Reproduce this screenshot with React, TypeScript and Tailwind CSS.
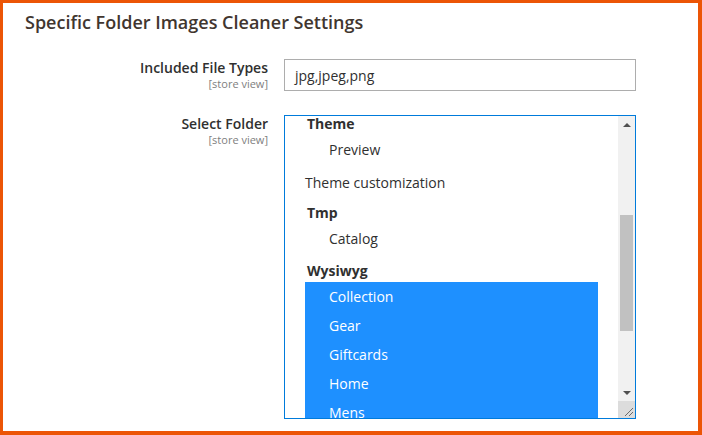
export default function App() {
  const groups: { kind: "label" | "opt" | "solo"; text: string; selected?: boolean }[] = [
    { kind: "label", text: "Theme" },
    { kind: "opt", text: "Preview" },
    { kind: "solo", text: "Theme customization" },
    { kind: "label", text: "Tmp" },
    { kind: "opt", text: "Catalog" },
    { kind: "label", text: "Wysiwyg" },
    { kind: "opt", text: "Collection", selected: true },
    { kind: "opt", text: "Gear", selected: true },
    { kind: "opt", text: "Giftcards", selected: true },
    { kind: "opt", text: "Home", selected: true },
    { kind: "opt", text: "Mens", selected: true },
  ]

  return (
    <div className="h-[435px] w-[702px] overflow-hidden border-t-[3px] border-l-[3px] border-r-[4px] border-b-[4px] border-[#ec5506] bg-white pl-[22px] pt-[7px] font-['Open_Sans',sans-serif] text-[#303030]">
      {/* Title */}
      <h2 className="text-[18px] font-semibold leading-[24px] text-[#41362f]">
        Specific Folder Images Cleaner Settings
      </h2>

      {/* Included File Types */}
      <div className="mt-[25px] flex gap-4">
        <div className="w-[243px] text-right">
          <div className="text-[14px] font-semibold leading-[18px]">Included File Types</div>
          <div className="text-[11px] leading-[13px] text-[#808080]">[store view]</div>
        </div>
        <div className="flex h-[32px] w-[352px] items-center border border-[#adadad] px-[10px] text-[14px]">
          jpg,jpeg,png
        </div>
      </div>

      {/* Select Folder */}
      <div className="mt-[24px] flex gap-4">
        <div className="w-[243px] text-right">
          <div className="text-[14px] font-semibold leading-[18px]">Select Folder</div>
          <div className="text-[11px] leading-[13px] text-[#808080]">[store view]</div>
        </div>
        <div className="flex h-[304px] w-[352px] border border-[#007bdb]">
          <div className="flex-1 overflow-hidden px-[20px]">
            <div className="-mt-[10px] text-[14px] leading-[19px]">
              {groups.map((g, i) => {
                if (g.kind === "label")
                  return (
                    <div key={i} className="h-[29px] pl-[2px] pt-[8px] font-bold">
                      {g.text}
                    </div>
                  )
                if (g.kind === "solo")
                  return (
                    <div key={i} className="h-[31px] pt-[9px]">
                      {g.text}
                    </div>
                  )
                return (
                  <div
                    key={i}
                    className={`flex h-[29px] items-center pl-[24px] ${
                      g.selected ? "bg-[#1e90ff] text-white" : ""
                    }`}
                  >
                    {g.text}
                  </div>
                )
              })}
            </div>
          </div>

          {/* Scrollbar */}
          <div className="flex w-[17px] flex-col bg-[#f1f1f1]">
            <div className="flex h-[17px] items-center justify-center">
              <div className="h-0 w-0 border-x-[4px] border-b-[4px] border-x-transparent border-b-[#505050]" />
            </div>
            <div className="flex-1">
              <div className="mx-[2px] mt-[82px] h-[116px] bg-[#c1c1c1]" />
            </div>
            <div className="flex h-[17px] items-center justify-center">
              <div className="h-0 w-0 border-x-[4px] border-t-[4px] border-x-transparent border-t-[#505050]" />
            </div>
            <div className="h-[17px] bg-[#dcdcdc]">
              <svg width="17" height="17" viewBox="0 0 17 17">
                <line x1="15" y1="7" x2="7" y2="15" stroke="#6b6b6b" strokeWidth="1" />
                <line x1="15" y1="11" x2="11" y2="15" stroke="#6b6b6b" strokeWidth="1" />
              </svg>
            </div>
          </div>
        </div>
      </div>
    </div>
  )
}
